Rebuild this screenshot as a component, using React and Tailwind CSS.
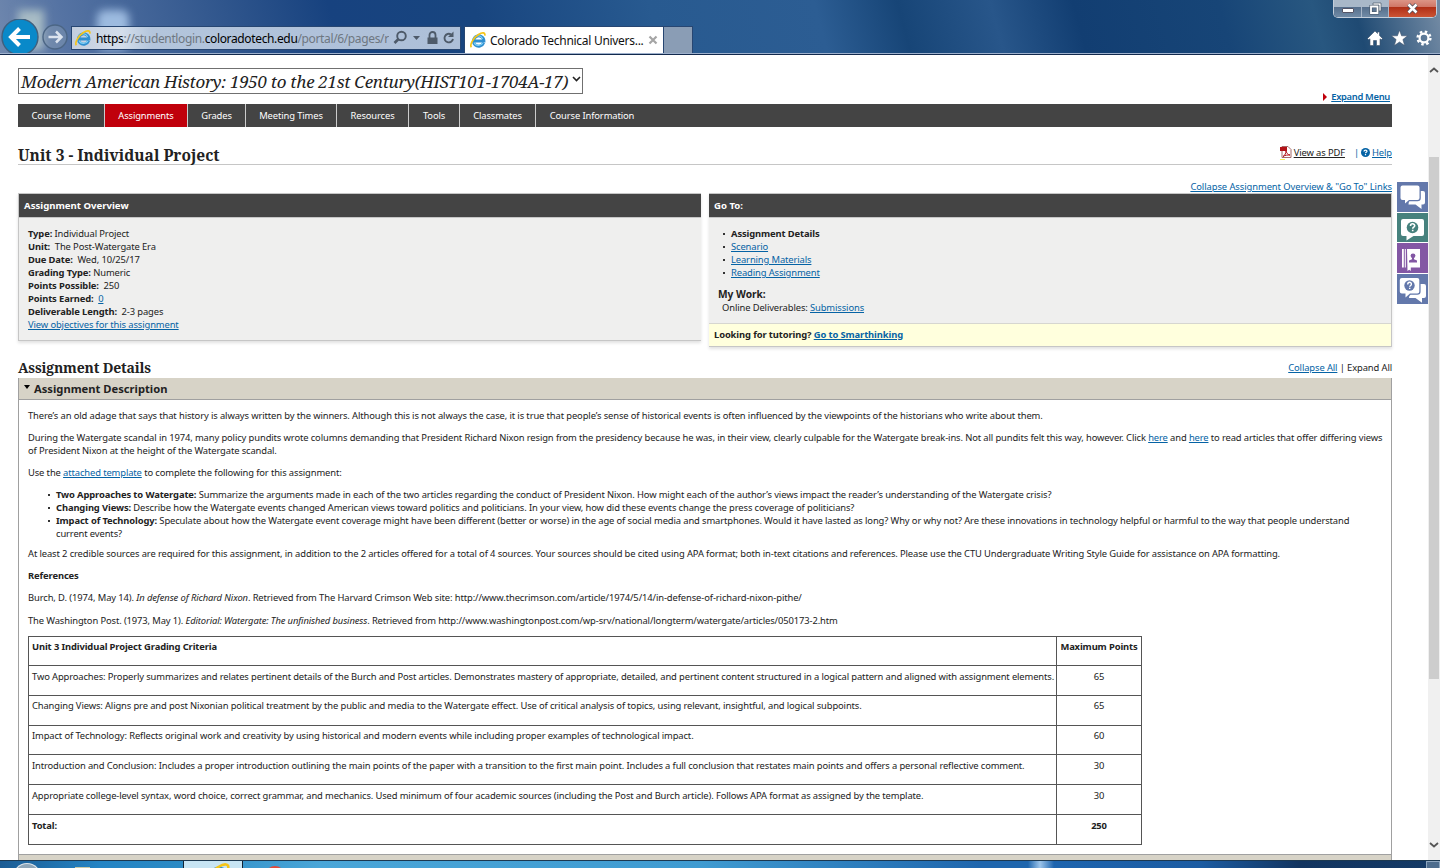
import React from 'react';
import clsx from 'clsx';

const navItems = [
  { label: 'Course Home', width: 'w-[87px]' },
  { label: 'Assignments', width: 'w-[83px]', active: true },
  { label: 'Grades', width: 'w-[58px]' },
  { label: 'Meeting Times', width: 'w-[91px]' },
  { label: 'Resources', width: 'w-[72px]' },
  { label: 'Tools', width: 'w-[51px]' },
  { label: 'Classmates', width: 'w-[76px]' },
  { label: 'Course Information', width: 'w-[112px]', last: true },
];

const criteria = [
  { text: 'Unit 3 Individual Project Grading Criteria', points: 'Maximum Points', height: 'h-[29px]', pad: 'pt-[3px]', bold: true },
  { text: 'Two Approaches: Properly summarizes and relates pertinent details of the Burch and Post articles. Demonstrates mastery of appropriate, detailed, and pertinent content structured in a logical pattern and aligned with assignment elements.', points: '65', height: 'h-[30px]', pad: 'pt-1' },
  { text: 'Changing Views: Aligns pre and post Nixonian political treatment by the public and media to the Watergate effect. Use of critical analysis of topics, using relevant, insightful, and logical subpoints.', points: '65', height: 'h-[30px]', pad: 'pt-[3px]' },
  { text: 'Impact of Technology: Reflects original work and creativity by using historical and modern events while including proper examples of technological impact.', points: '60', height: 'h-[29px]', pad: 'pt-[3px]' },
  { text: 'Introduction and Conclusion: Includes a proper introduction outlining the main points of the paper with a transition to the first main point. Includes a full conclusion that restates main points and offers a personal reflective comment.', points: '30', height: 'h-[30px]', pad: 'pt-1' },
  { text: 'Appropriate college-level syntax, word choice, correct grammar, and mechanics. Used minimum of four academic sources (including the Post and Burch article). Follows APA format as assigned by the template.', points: '30', height: 'h-[30px]', pad: 'pt-1' },
  { text: 'Total:', points: '250', height: 'h-[30px]', pad: 'pt-1', bold: true },
];

const Link = ({ children, className, color = 'text-[#0563a5]' }) => (
  <a href="#" className={clsx('underline underline-offset-[1px]', color, className)}>{children}</a>
);

const IELogo = ({ className }) => (
  <svg viewBox="0 0 16 16" className={className} fill="none">
    <path d="M13.600 10.800A5.200 5.200 0 1 1 13.900 9H5" stroke="#2f8fd0" strokeWidth="3" />
    <path d="M12.900 10.900A5 5 0 0 1 4 10.500M3.600 6.200A5 5 0 0 1 12.600 7" stroke="#7fd0f5" strokeWidth="1.200" />
    <path d="M1.400 15.200C-.6 13 3.500 5.500 8.500 2.500C12 .3 15.500 .2 14.800 3.600" stroke="#f5c518" strokeWidth="1.700" />
  </svg>
);

const BrowserChrome = () => (
  <header className="relative h-[55px] shrink-0 overflow-hidden border-b border-[#12294d] bg-[linear-gradient(75deg,#7088ae_0px,#5573a3_70px,#34598f_210px,#17427f_330px,#18457f_470px,#285a90_640px,#2c5d93_800px,#174577_880px,#28568a_970px,#123e72_1050px,#174577_1190px,#285780_1280px,#1f4a73_1320px,#7189a3_1400px,#5f7f9c_1440px)]">
    {/* desktop icons blurred through the glass */}
    <div className="absolute left-[18px] top-[10px] h-10 w-[26px] bg-[#a8bcc5] blur-[4px]" />
    <div className="absolute left-[97px] top-[10px] h-10 w-[32px] rounded-lg bg-[#9dbbe0] blur-[4px]" />

    <div className="relative flex h-full items-end border-b border-[#9eb1cd]">
      <div className="flex h-[34px] w-[70px] shrink-0 items-center">
        <svg width="70" height="34" viewBox="0 0 70 34" fill="none">
          <circle cx="20" cy="18" r="18" fill="#0989c9" stroke="#40607e" strokeWidth="1.400" />
          <path d="M30 18H12M19.500 9.500l-8.500 8.500l8.500 8.500" stroke="#fff" strokeWidth="4" />
          <circle cx="55" cy="18" r="12" fill="#8b9fb5" fillOpacity=".4" stroke="#4c6685" strokeWidth="1.400" />
          <path d="M48.500 18H61M56 12.500l5.500 5.500l-5.500 5.500" stroke="#dbe3ee" strokeWidth="2.500" />
        </svg>
      </div>

      <div className="mb-[3px] ml-px flex h-6 w-[390px] items-center border border-[#274672] bg-[linear-gradient(90deg,#c3cede,#d4deeb_50px,#b3c5dc_80px,#adbfd8)] font-['Noto_Sans'] text-[12px]">
        <IELogo className="ml-[3px] h-4 w-4" />
        <p className="ml-[5px] mt-[2px] w-[293px] overflow-hidden whitespace-nowrap leading-[18px] tracking-[-0.36px] text-[#6e7781]">
          <span className="text-black">https</span>://studentlogin.<span className="text-black">coloradotech.edu</span>/portal/6/pages/r
        </p>
        <svg width="66" height="16" viewBox="0 0 66 16" fill="none" className="ml-1">
          <circle cx="8.500" cy="6" r="4.300" stroke="#4e5a69" strokeWidth="1.900" />
          <path d="M5.500 9L1.500 13" stroke="#4e5a69" strokeWidth="2.600" />
          <path d="M20 6h7l-3.500 4z" fill="#4e5a69" />
          <path d="M34.500 7.500h10V14h-10z" fill="#4e5a69" />
          <path d="M36.500 8V5a3 3 0 0 1 6 0v3" stroke="#4e5a69" strokeWidth="1.800" />
          <path d="M60 9a4.300 4.300 0 1 1-2-4.600" stroke="#4e5a69" strokeWidth="1.900" />
          <path d="M60.500 1.500V7H55z" fill="#4e5a69" />
        </svg>
      </div>

      <div className="ml-[3px] flex h-[27px] w-[200px] items-center border border-b-0 border-[#274672] bg-white font-['Noto_Sans'] text-[12px] text-[#111]">
        <IELogo className="ml-[5px] h-4 w-4" />
        <span className="ml-1 mt-px w-[158px] whitespace-nowrap tracking-[-0.29px]">Colorado Technical Univers...</span>
        <svg width="10" height="10" viewBox="0 0 10 10" className="shrink-0"><path d="M1.500 1.500l7 7M8.500 1.500l-7 7" stroke="#a5a5a5" strokeWidth="2.200" /></svg>
      </div>
      <div className="h-[27px] w-[29px] border border-b-0 border-l-0 border-[#274672] bg-[#8a9db5]" />
    </div>

    {/* window buttons */}
    <div className="absolute right-[3px] top-0 flex h-[18px] w-[104px] overflow-hidden rounded-b-[5px] border border-t-0 border-[#c3cedb] bg-[#273c58]">
      <div className="flex w-[28px] items-center justify-center border-r border-[#a9b7c9] bg-[linear-gradient(180deg,#a9b8c8_0%,#a9b8c8_42%,#566f8c_43%,#718ba6_100%)]">
        <span className="mt-1 h-[5px] w-[12px] rounded-[1px] border border-[#556] bg-white" />
      </div>
      <div className="flex w-[27px] items-center justify-center border-r border-[#a9b7c9] bg-[linear-gradient(180deg,#a9b8c8_0%,#a9b8c8_42%,#566f8c_43%,#718ba6_100%)]">
        <svg width="13" height="13" viewBox="0 0 13 13" fill="none">
          <path d="M4 1h8v8h-2V3H4z" fill="#fff" stroke="#455566" strokeWidth=".7" />
          <path d="M2 4.500h6.500V11H2z" stroke="#455566" strokeWidth="3" />
          <path d="M2 4.500h6.500V11H2z" stroke="#fff" strokeWidth="1.800" />
        </svg>
      </div>
      <div className="flex flex-1 items-center justify-center bg-[linear-gradient(180deg,#dc9586_0%,#cf7565_42%,#b02f17_43%,#cc5434_100%)]">
        <svg width="13" height="11" viewBox="0 0 13 11"><path d="M2.500 1.500l8 8M10.500 1.500l-8 8" stroke="#4c4c58" strokeWidth="4" /><path d="M2.500 1.500l8 8M10.500 1.500l-8 8" stroke="#fff" strokeWidth="2.500" /></svg>
      </div>
    </div>

    {/* home, favorites, tools */}
    <div className="absolute right-2 top-[30px]">
      <svg width="66" height="17" viewBox="0 0 66 17">
        <path d="M9 1l2.500 2.500V2h2v3.500L16.500 8.500l-1.300 1.300L14 8.800V15.500H10.500v-5h-3v5H4V8.800L2.800 9.800L1.500 8.500z" fill="#fff" stroke="#3e526b" strokeWidth=".6" />
        <path d="M33.500 .2l2.100 5.600h6l-4.700 3.700l1.800 6.100l-5.200-3.600l-5.200 3.600l1.800-6.100L25.400 5.800h6z" fill="#fff" stroke="#3e526b" strokeWidth=".6" />
        <circle cx="58" cy="8" r="6.400" fill="none" stroke="#fff" strokeWidth="2.400" strokeDasharray="2.500 2.526" />
        <circle cx="58" cy="8" r="4.400" fill="none" stroke="#fff" strokeWidth="2.200" />
      </svg>
    </div>
  </header>
);

const sideTools = [
  { id: 'chat', bg: 'bg-[#6378ab]', height: 'h-[30px]' },
  { id: 'ask', bg: 'bg-[#46817d]', height: 'h-[29px]' },
  { id: 'contacts', bg: 'bg-[#8357a4]', height: 'h-[30px]' },
  { id: 'forum', bg: 'bg-[#6378ab]', height: 'h-[30px]' },
];

const SideIcon = ({ id }) => (
  <svg width="31" height="30" viewBox="0 0 31 30" fill="#fff" className="block">
    {id === 'chat' && (
      <>
        <path d="M13 9h13a2 2 0 0 1 2 2v9.500a2 2 0 0 1-2 2h-1.500V27l-6-4.500H11.500z" />
        <path d="M5.500 3.500h15a2 2 0 0 1 2 2v10.500a2 2 0 0 1-2 2H12l-4 3.500V18H5.500a2 2 0 0 1-2-2V5.500a2 2 0 0 1 2-2z" stroke="#6378ab" strokeWidth="2.600" paintOrder="stroke" />
      </>
    )}
    {id === 'ask' && (
      <>
        <path d="M6 6h19a2 2 0 0 1 2 2v13a2 2 0 0 1-2 2h-8.500L9.500 27.500V23H6a2 2 0 0 1-2-2V8a2 2 0 0 1 2-2z" />
        <circle cx="15.500" cy="14.500" r="5.800" fill="#46817d" />
        <path d="M13.500 13c0-3 4.200-2.800 4.200-.3c0 1.500-2 1.500-2 3M15.700 16.800v1.500" fill="none" stroke="#fff" strokeWidth="1.600" />
      </>
    )}
    {id === 'contacts' && (
      <>
        <path d="M5 6h1.800v18.500H5zM7.800 6h1v18.500h-1zM10 6h13v18.500h-9.200V28l-1.600-1.300L10.500 28z" />
        <circle cx="16" cy="12.800" r="2.400" fill="#8357a4" />
        <path d="M15 14h2v2.200l3 1.300v2h-8v-2l3-1.300z" fill="#8357a4" />
      </>
    )}
    {id === 'forum' && (
      <>
        <path d="M14 10h13a2 2 0 0 1 2 2v10a2 2 0 0 1-2 2h-2v4.800L18.500 24H12z" />
        <path d="M4.800 4h15.500a2 2 0 0 1 2 2v11.500a2 2 0 0 1-2 2H13l-4.500 4v-4H4.800a2 2 0 0 1-2-2V6a2 2 0 0 1 2-2z" stroke="#6378ab" strokeWidth="2.600" paintOrder="stroke" />
        <circle cx="12.500" cy="11.500" r="5.200" fill="#6378ab" />
        <path d="M10.700 10.500c0-3 3.700-2.800 3.700-.3c0 1.500-1.700 1.500-1.700 2.600M12.700 13.800v1.300" fill="none" stroke="#fff" strokeWidth="1.400" />
      </>
    )}
  </svg>
);

const AssignmentOverview = () => (
  <section className="w-[683px] border border-r-0 border-[#c6c6c6] bg-[#efefee] shadow-[0_2px_3px_rgba(0,0,0,0.12)]">
    <h2 className="h-6 border-b border-[#c6c6c6] bg-[#444] pl-[5px] text-[9.6px] font-bold leading-[23px] tracking-normal text-white">Assignment Overview</h2>
    <div className="h-[122px] pl-[9px] pt-[9px]">
      <p><b>Type:</b> Individual Project</p>
      <p><b>Unit:</b>&nbsp; The Post-Watergate Era</p>
      <p><b>Due Date:</b>&nbsp; Wed, 10/25/17</p>
      <p><b>Grading Type:</b> Numeric</p>
      <p><b>Points Possible:</b>&nbsp; 250</p>
      <p><b>Points Earned:</b>&nbsp; <Link>0</Link></p>
      <p><b>Deliverable Length:</b>&nbsp; 2-3 pages</p>
      <p><Link>View objectives for this assignment</Link></p>
    </div>
  </section>
);

const Bullet = () => <span className="mr-[6px] mt-[6px] h-[2px] w-[2px] shrink-0 bg-[#333]" />;

const GoTo = () => (
  <section className="w-[683px] border border-l-0 border-[#c6c6c6] bg-[#efefee] shadow-[0_2px_3px_rgba(0,0,0,0.12)]">
    <h2 className="h-6 border-b border-[#c6c6c6] bg-[#444] pl-[5px] text-[9.6px] font-bold leading-[23px] tracking-normal text-white">Go To:</h2>
    <div className="h-[105px] pl-[14px] pt-[9px]">
      <ul>
        <li className="flex"><Bullet /><b>Assignment Details</b></li>
        {['Scenario', 'Learning Materials', 'Reading Assignment'].map((item) => (
          <li key={item} className="flex"><Bullet /><Link>{item}</Link></li>
        ))}
      </ul>
      <h3 className="-ml-[5px] mt-[9px] text-[10.2px] font-bold tracking-[-0.02px]">My Work:</h3>
      <p className="-ml-px">Online Deliverables: <Link>Submissions</Link></p>
    </div>
    <p className="h-[23px] border-t border-[#d6d6d0] bg-[#ffd] pl-[5px] font-bold leading-[22px]">
      Looking for tutoring? <Link>Go to Smarthinking</Link>
    </p>
  </section>
);

const Description = () => (
  <div className="h-[455px] whitespace-nowrap border-b border-[#a0a0a0] px-[9px] pt-[9px]">
    <p>There’s an old adage that says that history is always written by the winners. Although this is not always the case, it is true that people’s sense of historical events is often influenced by the viewpoints of the historians who write about them.</p>
    <p className="mt-[9px]">
      During the Watergate scandal in 1974, many policy pundits wrote columns demanding that President Richard Nixon resign from the presidency because he was, in their view, clearly culpable for the Watergate break-ins. Not all pundits felt this way, however. Click <Link>here</Link> and <Link>here</Link> to read articles that offer differing views
      <br />of President Nixon at the height of the Watergate scandal.
    </p>
    <p className="mt-[9px]">Use the <Link>attached template</Link> to complete the following for this assignment:</p>
    <ul className="ml-5 mt-[9px]">
      <li className="flex"><Bullet /><p><b>Two Approaches to Watergate:</b> Summarize the arguments made in each of the two articles regarding the conduct of President Nixon. How might each of the author’s views impact the reader’s understanding of the Watergate crisis?</p></li>
      <li className="flex"><Bullet /><p><b>Changing Views:</b> Describe how the Watergate events changed American views toward politics and politicians. In your view, how did these events change the press coverage of politicians?</p></li>
      <li className="flex"><Bullet /><p><b>Impact of Technology:</b> Speculate about how the Watergate event coverage might have been different (better or worse) in the age of social media and smartphones. Would it have lasted as long? Why or why not? Are these innovations in technology helpful or harmful to the way that people understand<br />current events?</p></li>
    </ul>
    <p className="mt-[7px]">At least 2 credible sources are required for this assignment, in addition to the 2 articles offered for a total of 4 sources. Your sources should be cited using APA format; both in-text citations and references. Please use the CTU Undergraduate Writing Style Guide for assistance on APA formatting.</p>
    <p className="mt-[9px]"><b>References</b></p>
    <p className="mt-[9px] tracking-[-0.1px]">Burch, D. (1974, May 14). <i>In defense of Richard Nixon</i>. Retrieved from The Harvard Crimson Web site: http://www.thecrimson.com/article/1974/5/14/in-defense-of-richard-nixon-pithe/</p>
    <p className="mt-[10px]">The Washington Post. (1973, May 1). <i>Editorial: Watergate: The unfinished business</i>. Retrieved from http://www.washingtonpost.com/wp-srv/national/longterm/watergate/articles/050173-2.htm</p>
    <div className="mt-[9px] w-[1114px] border-l border-t border-[#555] tracking-[-0.12px]">
      {criteria.map((row, i) => (
        <div key={i} className={clsx('flex border-b border-[#555]', row.height, row.bold && 'font-bold')}>
          <div className={clsx('w-[1028px] border-r border-[#555] pl-[3px]', row.pad)}>{row.text}</div>
          <div className={clsx('w-[85px] border-r border-[#555] text-center', row.pad)}>{row.points}</div>
        </div>
      ))}
    </div>
  </div>
);

const Taskbar = () => (
  <footer className="relative h-2 shrink-0 overflow-hidden border-t border-[#1c3850] bg-[linear-gradient(90deg,#1b5c94,#2484c4_100px,#2b8ac4_180px,#4aa6d8_320px,#3f9bd1_700px,#1f66ad_980px,#1f66ad_1028px,#9cc4ea_1040px,#1d64ae_1054px,#1c5ca2_1200px,#12345f_1300px,#143a66)]">
    <div className="absolute left-[13px] top-[2px] h-7 w-7 rounded-full border border-white/70 bg-[#8fa6b8]" />
    <div className="absolute left-[75px] top-[6px] h-2 w-[15px] bg-[#c9c9a8]" />
    <div className="absolute left-[183px] top-0 h-2 w-[60px] border-x border-[#123] bg-[#c7e4f3]">
      <IELogo className="ml-[22px] mt-[2px] h-6 w-6" />
    </div>
    <div className="absolute left-[265px] top-[5px] h-6 w-5 rounded-full bg-[#e04a3b]" />
    <div className="absolute right-0 top-0 h-2 w-[14px] border border-[#8ea6bf] bg-[#4d6c8d]" />
  </footer>
);

const App = () => {
  return (
    <div className="flex h-[868px] w-[1440px] flex-col overflow-hidden bg-white font-['Noto_Sans',sans-serif] text-[9.4px] leading-[13px] tracking-[-0.112px] text-[#222]">
      <BrowserChrome />
      <div className="flex h-[805px] overflow-hidden">
        <main className="ml-[18px] w-[1374px] shrink-0 pt-[13px]">
          <div className="flex h-9 justify-between">
            <div className="flex h-[26px] w-[565px] items-center whitespace-nowrap border border-[#707070] pl-[2px] font-['Noto_Serif','Droid_Serif','DejaVu_Serif',serif] text-[17px] italic tracking-[-0.31px]">
              <span className="w-[551px] shrink-0">Modern American History: 1950 to the 21st Century(HIST101-1704A-17)</span>
              <svg width="9" height="6" viewBox="0 0 9 6" fill="none" className="mb-1 shrink-0"><path d="M1 1l3.500 3.500L8 1" stroke="#222" strokeWidth="1.600" /></svg>
            </div>
            <div className="mr-[2px] mt-[22px] flex items-start">
              <span className="mr-1 mt-[3px] border-y-[4px] border-l-[4px] border-y-transparent border-l-[#c0000b]" />
              <Link className="font-semibold tracking-[-0.32px]">Expand Menu</Link>
            </div>
          </div>

          <nav className="flex h-[23px] bg-[#444] leading-[23px] text-white">
            {navItems.map((item) => (
              <a key={item.label} href="#" className={clsx('text-center', item.width, item.active && 'bg-[#c0000b]', !item.last && 'border-r border-[#ccc]')}>{item.label}</a>
            ))}
          </nav>

          <div className="flex h-[38px] items-start justify-between border-b border-[#c6c6c6]">
            <h1 className="mt-[18px] font-['Noto_Serif','Droid_Serif','DejaVu_Serif',serif] text-[15.5px] font-bold leading-[20px] tracking-normal">Unit 3 - Individual Project</h1>
            <div className="mt-[19px] flex">
              <svg width="12" height="14" viewBox="0 0 12 14" className="mr-[2px]">
                <path d="M2 .5h6l3 3v8H2z" fill="#fff" stroke="#a56a6a" />
                <path d="M0 1h7v4H0z" fill="#b31217" />
                <path d="M3 10.500c2-1 3-3.500 3-6c0 2 2 4.500 4 4.500c-2 0-5 0-7 1.500z" fill="none" stroke="#b31217" />
                <path d="M0 13h5v1H0z" fill="#f5ee5a" />
              </svg>
              <Link color="text-[#222]">View as PDF</Link>
              <span className="ml-[9px] mr-[2px] text-[#0563a5]">|</span>
              <svg width="9" height="9" viewBox="0 0 9 9" className="mr-[2px] mt-[2px]">
                <circle cx="4.500" cy="4.500" r="4.500" fill="#0563a5" />
                <path d="M3 3.500c0-2 3-1.800 3-.2c0 1-1.500 1-1.500 2M4.500 6v1.300" fill="none" stroke="#fff" strokeWidth="1.200" />
              </svg>
              <Link>Help</Link>
            </div>
          </div>

          <div className="flex h-7 items-end justify-end"><Link className="tracking-[-0.07px]">Collapse Assignment Overview &amp; "Go To" Links</Link></div>

          <div className="flex items-start gap-2">
            <AssignmentOverview />
            <GoTo />
          </div>

          <div className="flex h-[31px] items-end justify-between">
            <h2 className="font-['Noto_Serif','Droid_Serif','DejaVu_Serif',serif] text-[14px] font-bold leading-[20px] tracking-[-0.17px]">Assignment Details</h2>
            <p className="mb-1"><Link>Collapse All</Link> | Expand All</p>
          </div>

          <section className="border-x border-[#a0a0a0]">
            <h3 className="flex h-[22px] items-center border-b border-[#a0a0a0] bg-[#d7d3c7] pl-[5px] text-[11.2px] font-bold tracking-normal">
              <span className="mb-[3px] mr-[3px] border-x-[3.5px] border-t-[4px] border-x-transparent border-t-black" />
              <span className="ml-px">Assignment Description</span>
            </h3>
            <Description />
            <div className="h-[22px] bg-[#d7d3c7]" />
          </section>
        </main>

        <aside className="ml-[5px] mt-[127px] flex w-[31px] shrink-0 flex-col gap-px">
          {sideTools.map((tool) => (
            <div key={tool.id} className={clsx('overflow-hidden', tool.height, tool.bg)}><SideIcon id={tool.id} /></div>
          ))}
        </aside>

        <div className="flex w-3 flex-1 flex-col items-center bg-[#f0f0f0]">
          <svg width="10" height="6" viewBox="0 0 10 6" fill="none" className="mt-3"><path d="M1 5l4-3.500L9 5" stroke="#555" strokeWidth="1.800" /></svg>
          <div className="mt-[84px] h-[522px] w-[10px] bg-[#cdcdcd]" />
          <svg width="10" height="6" viewBox="0 0 10 6" fill="none" className="mb-3 mt-auto"><path d="M1 1l4 3.500L9 1" stroke="#555" strokeWidth="1.800" /></svg>
        </div>
      </div>
      <Taskbar />
    </div>
  );
};

export default App;
